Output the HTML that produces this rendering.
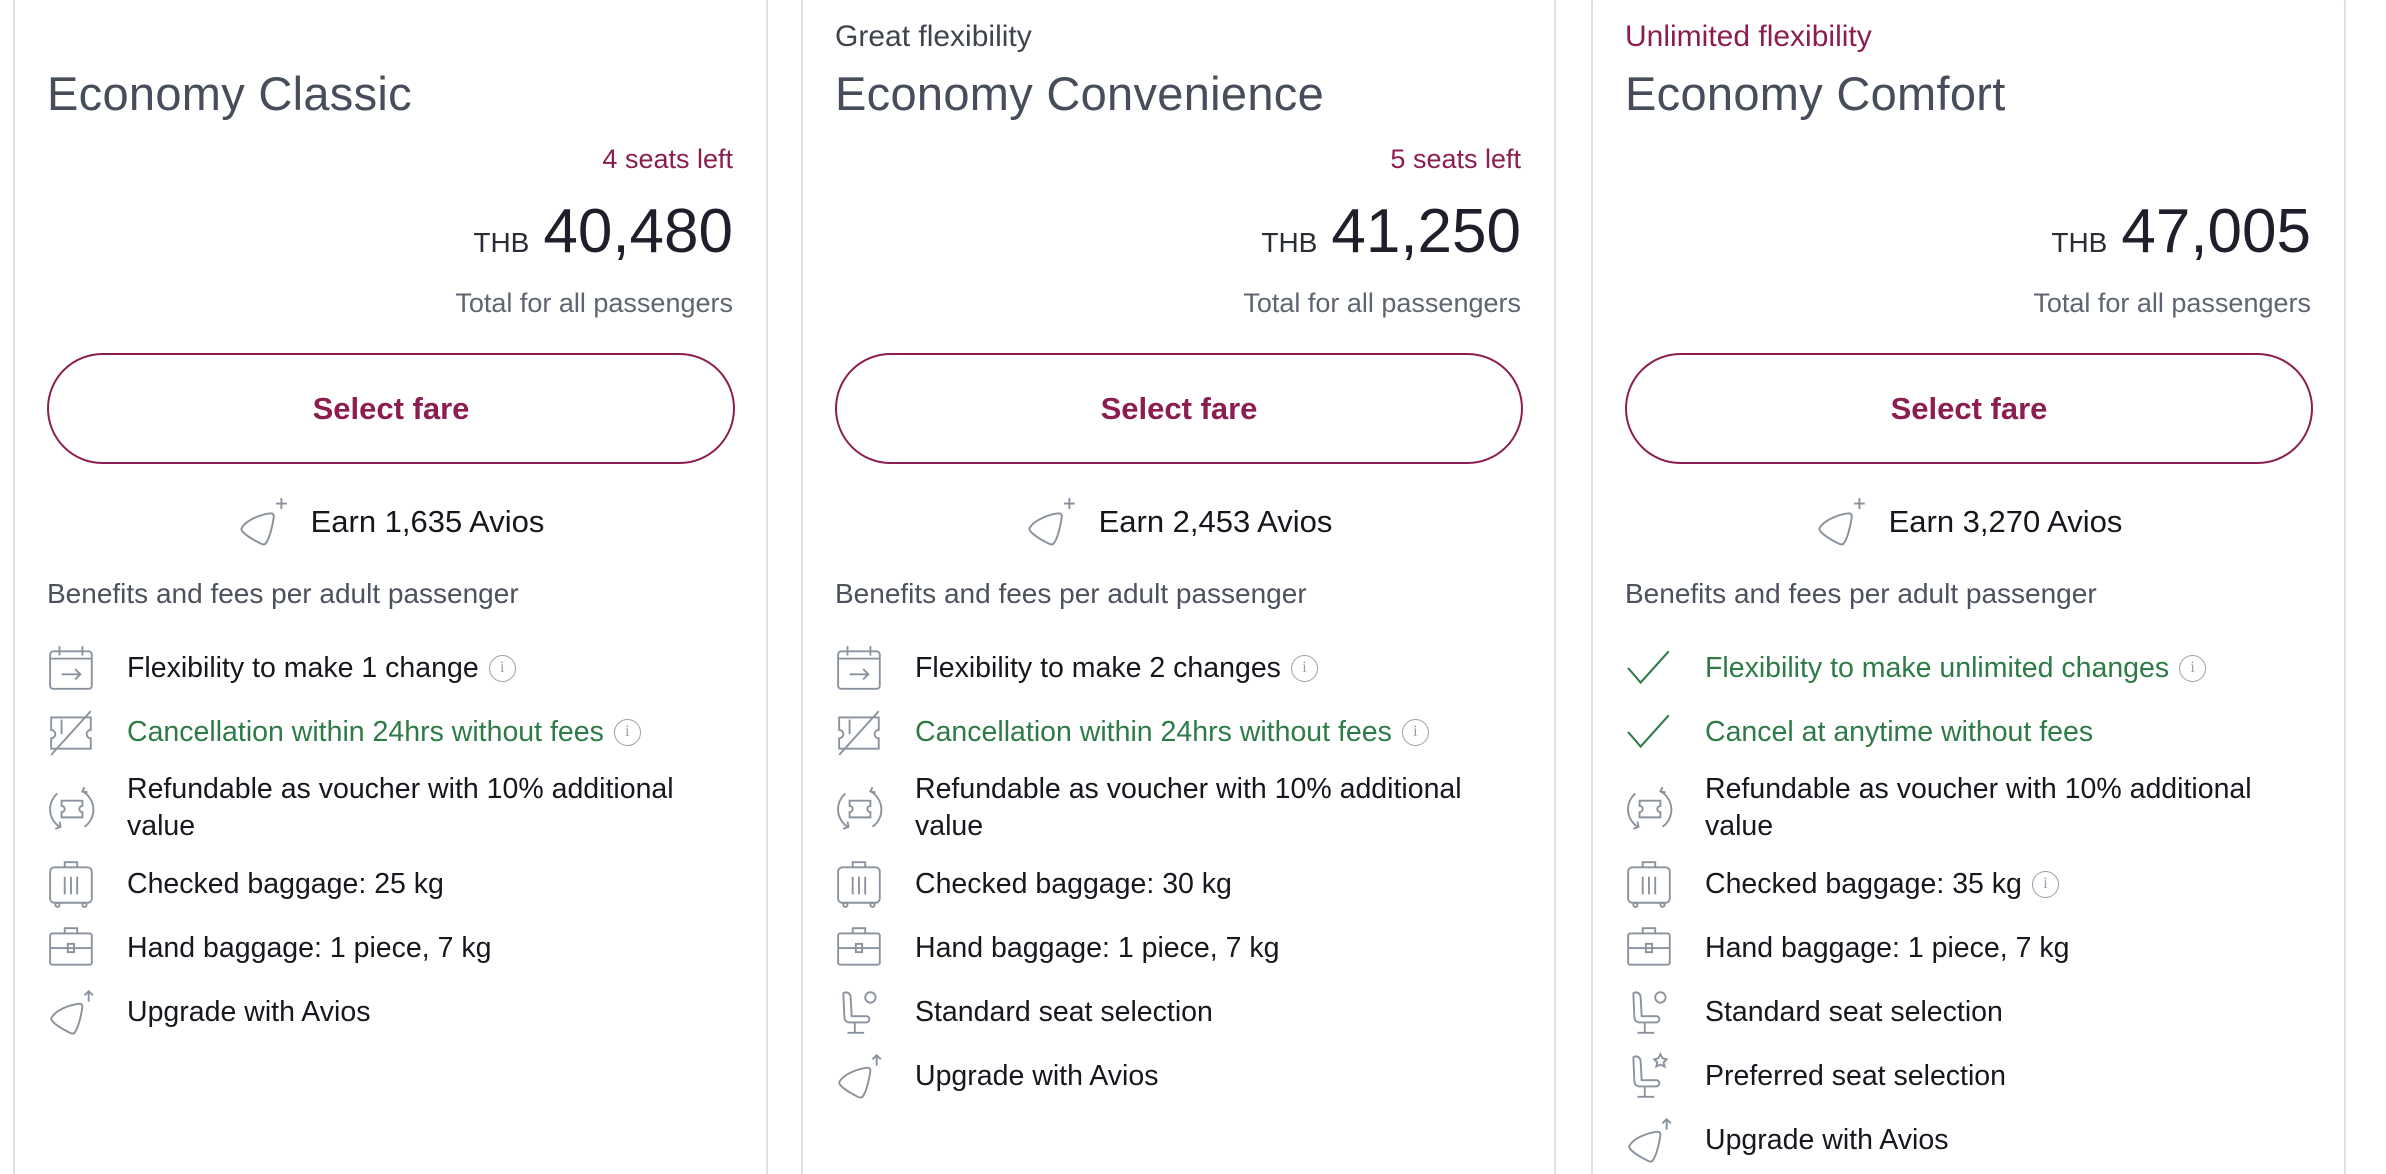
<!DOCTYPE html>
<html><head><meta charset="utf-8">
<style>
*{margin:0;padding:0;box-sizing:border-box}
html,body{width:2386px;height:1174px;overflow:hidden;background:#fff;font-family:"Liberation Sans",sans-serif}
#wrap{position:relative;width:2386px;height:1174px;overflow:hidden}
.card{position:absolute;top:-30px;width:755px;height:1300px;border:2px solid #dcdfea;border-radius:34px;background:#fff}
.c1{left:13px}.c2{left:801px}.c3{left:1591px}
.tag{position:absolute;left:32px;top:48px;font-size:30px;color:#3f4450}
.c3 .tag{color:#8b1d51}
.title{position:absolute;left:32px;top:94px;font-size:47px;color:#474d5a;letter-spacing:0.3px}
.seats{position:absolute;right:33px;top:172px;font-size:27px;color:#8b1d51}
.price{position:absolute;right:33px;top:224px;font-size:62px;color:#1e1f2a;white-space:nowrap}
.price small{font-size:28px;margin-right:14px;color:#2a2c36}
.total{position:absolute;right:33px;top:316px;font-size:27px;color:#5e6570}
.btn{position:absolute;left:32px;width:688px;top:381px;height:111px;border:2px solid #8b1d51;border-radius:56px;display:flex;align-items:center;justify-content:center;font-size:31px;font-weight:bold;color:#8b1d51}
.earn{position:absolute;left:0;right:0;top:524px;display:flex;justify-content:center;align-items:center;font-size:31px;color:#15161e}
.earn svg{margin-right:22px}
.ben{position:absolute;left:32px;top:606px;font-size:28px;color:#4c525d}
ul{position:absolute;left:32px;top:664px;list-style:none;width:700px}
li{display:flex;align-items:center;min-height:64px;font-size:28.5px;color:#16171f;line-height:37px}
li>span{max-width:600px}
li .ic{width:50px;height:50px;flex:none;margin-right:30px}
li.g{color:#2e7b48}
li.two{min-height:88px}
.inf{display:inline-block;width:27px;height:27px;border:1.5px solid #9aa1ac;border-radius:50%;font-size:16px;color:#9aa1ac;text-align:center;line-height:24px;vertical-align:middle;margin-left:10px;font-family:"Liberation Serif",serif}
</style></head><body>
<svg width="0" height="0" style="position:absolute">
<defs>
<g id="cal" fill="none" stroke="#8a929d" stroke-width="1.8"><rect x="3" y="8" width="40" height="36" rx="3"/><path d="M3 15h40M12 3v9M34 3v9M14 30h18M27 25l5 5-5 5"/></g>
<g id="canc" fill="none" stroke="#8a929d" stroke-width="1.8"><path d="M4 10h38v12a4 4 0 0 0 0 8v10H4V30a4 4 0 0 0 0-8z"/><path d="M14 12v14M42 4L4 46"/></g>
<g id="ref" fill="none" stroke="#8a929d" stroke-width="1.8"><path d="M10 10A20 20 0 0 0 12 42M36 42A20 20 0 0 0 34 8"/><path d="M8 44l5-2-1-5M36 4l-2 4 5 1"/><path d="M14 17h20v5a3 3 0 0 0 0 6v5H14v-5a3 3 0 0 0 0-6z"/></g>
<g id="bag" fill="none" stroke="#8a929d" stroke-width="1.8"><rect x="3" y="8" width="40" height="34" rx="4"/><path d="M17 8V3h12v5M17 17v17M23 17v17M29 17v17"/><circle cx="10" cy="44" r="2"/><circle cx="36" cy="44" r="2"/></g>
<g id="hand" fill="none" stroke="#8a929d" stroke-width="1.8"><rect x="3" y="10" width="40" height="30" rx="2"/><path d="M17 10V5h12v5M3 24h40"/><rect x="20" y="20" width="6" height="8"/></g>
<g id="avu" fill="none" stroke="#8a929d" stroke-width="1.8"><path d="M4 30C8 22 22 17 31 16c2 0 3 1 3 3-1 8-4 20-7 24-1 2-3 2-5 1C14 40 4 34 4 30z"/><path d="M40 4v10M36 8l4-4 4 4"/></g>
<g id="avp" fill="none" stroke="#8a929d" stroke-width="1.8"><path d="M4 30C8 22 22 17 31 16c2 0 3 1 3 3-1 8-4 20-7 24-1 2-3 2-5 1C14 40 4 34 4 30z"/><path d="M41 2v10M36 7h10"/></g>
<g id="seat" fill="none" stroke="#8a929d" stroke-width="1.8"><path d="M8 6c3-2 7 0 7 4l1 18h14a3 3 0 0 1 0 6H14c-3 0-5-2-5-5z"/><path d="M19 34v10M12 44h16"/><circle cx="34" cy="10" r="5"/></g>
<g id="seatp" fill="none" stroke="#8a929d" stroke-width="1.8"><path d="M8 6c3-2 7 0 7 4l1 18h14a3 3 0 0 1 0 6H14c-3 0-5-2-5-5z"/><path d="M19 34v10M12 44h16"/><path d="M34 3l2 4 4 1-3 3 1 4-4-2-4 2 1-4-3-3 4-1z"/></g>
<g id="chk" fill="none" stroke="#2e7b48" stroke-width="2"><path d="M3 24l12 14L42 8"/></g>
</defs></svg>
<div id="wrap">
<div class="card c1">
<div class="title">Economy Classic</div>
<div class="seats">4 seats left</div>
<div class="price"><small>THB</small>40,480</div>
<div class="total">Total for all passengers</div>
<div class="btn">Select fare</div>
<div class="earn"><svg width="52" height="52" viewBox="0 0 48 48"><use href="#avp"/></svg>Earn 1,635 Avios</div>
<div class="ben">Benefits and fees per adult passenger</div>
<ul>
<li><svg class="ic" viewBox="0 0 48 48"><use href="#cal"/></svg><span>Flexibility to make 1 change<span class="inf">i</span></span></li>
<li class="g"><svg class="ic" viewBox="0 0 48 48"><use href="#canc"/></svg><span>Cancellation within 24hrs without fees<span class="inf">i</span></span></li>
<li class="two"><svg class="ic" viewBox="0 0 48 48"><use href="#ref"/></svg><span>Refundable as voucher with 10% additional value</span></li>
<li><svg class="ic" viewBox="0 0 48 48"><use href="#bag"/></svg><span>Checked baggage: 25 kg</span></li>
<li><svg class="ic" viewBox="0 0 48 48"><use href="#hand"/></svg><span>Hand baggage: 1 piece, 7 kg</span></li>
<li><svg class="ic" viewBox="0 0 48 48"><use href="#avu"/></svg><span>Upgrade with Avios</span></li>
</ul>
</div>

<div class="card c2">
<div class="tag">Great flexibility</div>
<div class="title">Economy Convenience</div>
<div class="seats">5 seats left</div>
<div class="price"><small>THB</small>41,250</div>
<div class="total">Total for all passengers</div>
<div class="btn">Select fare</div>
<div class="earn"><svg width="52" height="52" viewBox="0 0 48 48"><use href="#avp"/></svg>Earn 2,453 Avios</div>
<div class="ben">Benefits and fees per adult passenger</div>
<ul>
<li><svg class="ic" viewBox="0 0 48 48"><use href="#cal"/></svg><span>Flexibility to make 2 changes<span class="inf">i</span></span></li>
<li class="g"><svg class="ic" viewBox="0 0 48 48"><use href="#canc"/></svg><span>Cancellation within 24hrs without fees<span class="inf">i</span></span></li>
<li class="two"><svg class="ic" viewBox="0 0 48 48"><use href="#ref"/></svg><span>Refundable as voucher with 10% additional value</span></li>
<li><svg class="ic" viewBox="0 0 48 48"><use href="#bag"/></svg><span>Checked baggage: 30 kg</span></li>
<li><svg class="ic" viewBox="0 0 48 48"><use href="#hand"/></svg><span>Hand baggage: 1 piece, 7 kg</span></li>
<li><svg class="ic" viewBox="0 0 48 48"><use href="#seat"/></svg><span>Standard seat selection</span></li>
<li><svg class="ic" viewBox="0 0 48 48"><use href="#avu"/></svg><span>Upgrade with Avios</span></li>
</ul>
</div>

<div class="card c3">
<div class="tag">Unlimited flexibility</div>
<div class="title">Economy Comfort</div>
<div class="price"><small>THB</small>47,005</div>
<div class="total">Total for all passengers</div>
<div class="btn">Select fare</div>
<div class="earn"><svg width="52" height="52" viewBox="0 0 48 48"><use href="#avp"/></svg>Earn 3,270 Avios</div>
<div class="ben">Benefits and fees per adult passenger</div>
<ul>
<li class="g"><svg class="ic" viewBox="0 0 48 48"><use href="#chk"/></svg><span>Flexibility to make unlimited changes<span class="inf">i</span></span></li>
<li class="g"><svg class="ic" viewBox="0 0 48 48"><use href="#chk"/></svg><span>Cancel at anytime without fees</span></li>
<li class="two"><svg class="ic" viewBox="0 0 48 48"><use href="#ref"/></svg><span>Refundable as voucher with 10% additional value</span></li>
<li><svg class="ic" viewBox="0 0 48 48"><use href="#bag"/></svg><span>Checked baggage: 35 kg<span class="inf">i</span></span></li>
<li><svg class="ic" viewBox="0 0 48 48"><use href="#hand"/></svg><span>Hand baggage: 1 piece, 7 kg</span></li>
<li><svg class="ic" viewBox="0 0 48 48"><use href="#seat"/></svg><span>Standard seat selection</span></li>
<li><svg class="ic" viewBox="0 0 48 48"><use href="#seatp"/></svg><span>Preferred seat selection</span></li>
<li><svg class="ic" viewBox="0 0 48 48"><use href="#avu"/></svg><span>Upgrade with Avios</span></li>
</ul>
</div>
</div>
</body></html>
